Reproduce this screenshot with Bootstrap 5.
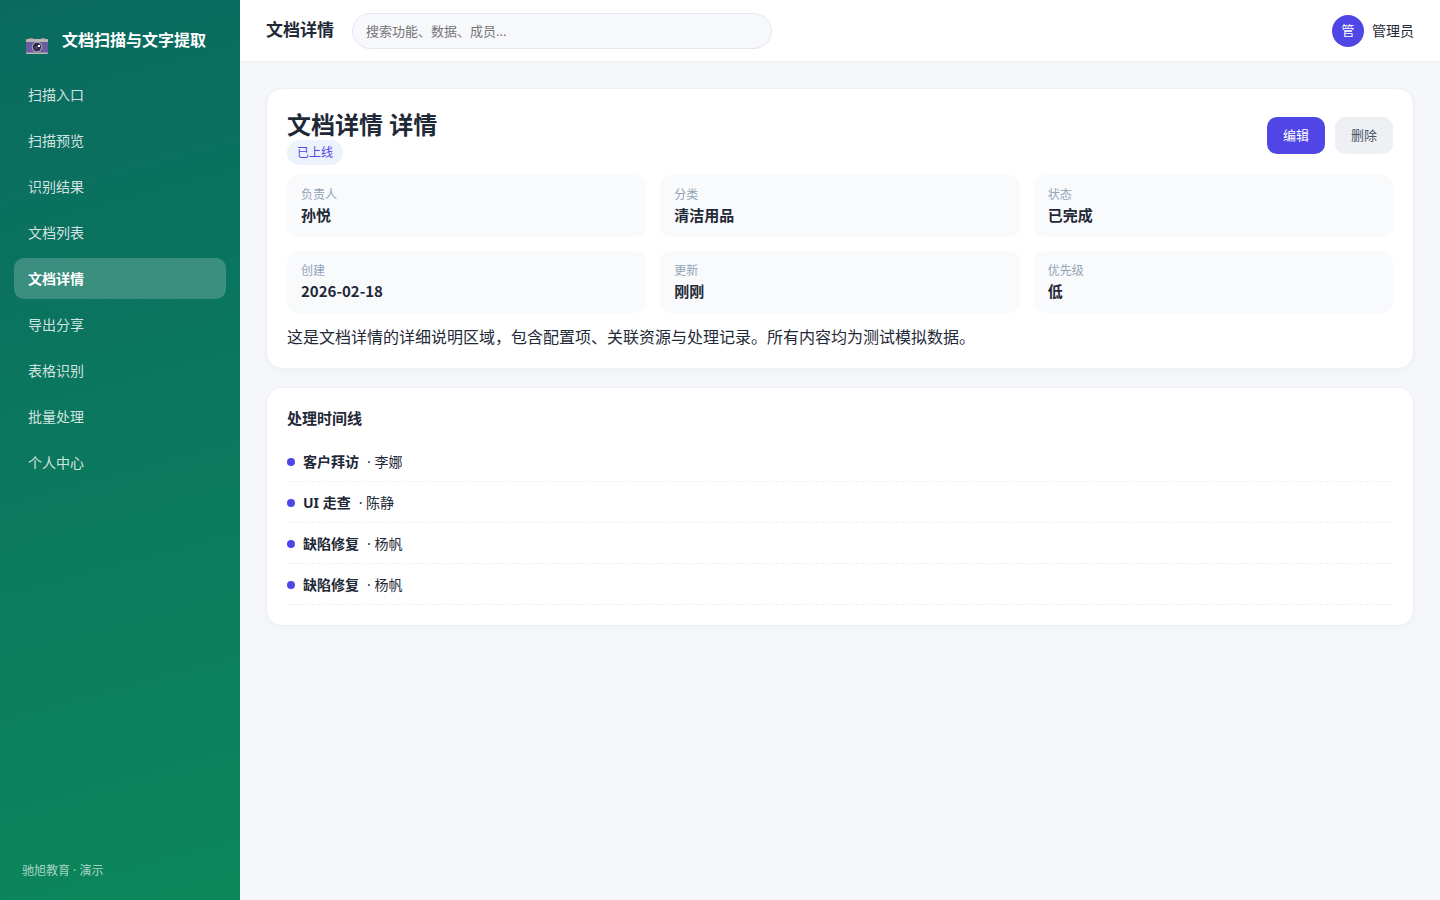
<!DOCTYPE html>
<html lang="zh-CN">
<head>
<meta charset="utf-8">
<meta name="viewport" content="width=device-width, initial-scale=1">
<title>文档详情</title>
<link href="https://cdn.jsdelivr.net/npm/bootstrap@5.3.0/dist/css/bootstrap.min.css" rel="stylesheet">
<style>
:root { --ink: #1f2937; --brand: #4f46e5; --line: #eef0f4; }
body { font-family: "Noto Sans", "Noto Sans CJK SC", sans-serif; font-size: 14px; line-height: 21px; color: var(--ink); background: #f5f7fb; }
.sidebar { width: 240px; padding: 18px 14px; background: linear-gradient(165deg, #0a6a60, #0c875b); }
.brand { height: 44px; padding: 0 12px; margin-bottom: 12px; gap: 14px; font-size: 16px; font-weight: 700; color: #fff; }
.brand svg { margin-top: 11px; }
.side-nav { gap: 5px; }
.side-nav .nav-link { padding: 10px 14px; border-radius: 10px; color: rgba(255,255,255,.82); }
.side-nav .nav-link.active { background: rgba(255,255,255,.2); color: #fff; font-weight: 700; }
.side-foot { padding: 0 8px; font-size: 12px; line-height: 22px; color: rgba(255,255,255,.65); }
.topbar { height: 62px; padding: 0 26px; gap: 18px; background: #fff; border-bottom: 1px solid var(--line); }
.topbar h1 { font-size: 17px; font-weight: 700; }
.search { max-width: 420px; height: 36px; padding: 0 13px; font-size: 13px; background: #f7f8fc; border: 1px solid #e5e7f0; border-radius: 18px; }
.search::placeholder { color: #757575; }
.avatar { width: 32px; height: 32px; border-radius: 50%; background: var(--brand); color: #fff; font-size: 13px; }
.content { padding: 26px; gap: 18px; }
.panel { padding: 20px; background: #fff; border: 1px solid var(--line); border-radius: 16px; box-shadow: 0 2px 6px rgba(30,41,80,.04); }
.panel h2 { font-size: 24px; line-height: 31px; font-weight: 700; }
.panel h3 { font-size: 15px; line-height: 20px; font-weight: 700; margin-bottom: 13px; }
.tag { display: block; width: fit-content; padding: 2px 10px; border-radius: 13px; background: #eef2ff; color: var(--brand); font-size: 12px; }
.actions { gap: 10px; }
.act { padding: 8px 16px; border: 0; border-radius: 10px; font-size: 13px; line-height: 21px; }
.act-main, .act-main:hover { background: var(--brand); color: #fff; }
.act-soft, .act-soft:hover { background: #eef0f4; color: #475569; }
.facts { gap: 14px; margin: 10px 0 14px; display: grid; grid-template-columns: repeat(3, 1fr); }
.fact { padding: 10px 14px 12px; border-radius: 10px; background: #f9fafc; }
.fact dt { font-size: 12px; line-height: 19px; font-weight: 400; color: #94a3b8; }
.fact dd { font-family: "Noto Sans CJK SC", sans-serif; font-size: 15px; line-height: 21px; font-weight: 700; margin: 0; }
.desc { font-size: 16px; line-height: 21px; }
.timeline li { gap: 8px; padding: 10px 0 9px; border-bottom: 1px dashed var(--line); }
.timeline li::before { content: ""; width: 8px; height: 8px; border-radius: 50%; background: var(--brand); }
</style>
</head>
<body>
<div class="d-flex min-vh-100">
  <aside class="sidebar d-flex flex-column flex-shrink-0">
    <div class="brand d-flex align-items-center">
      <svg width="22" height="16" viewBox="0 0 22 16" aria-hidden="true">
        <path d="M3 0h4v2H3zM15 0h4v2h-4z" fill="#b87d83"/>
        <rect y="1" width="22" height="15" rx="1" fill="#b5b6b7"/>
        <path d="M0 4h22v10.5H0z" fill="#6a5c9e"/>
        <circle cx="11" cy="9" r="5.3" fill="#a9a7ac"/>
        <circle cx="11" cy="9" r="4.2" fill="#302649"/>
        <circle cx="10.5" cy="9.5" r="2" fill="#49417a"/>
        <path d="M12 7h2v2h-2z" fill="#fff"/>
      </svg>
      <span>文档扫描与文字提取</span>
    </div>
    <nav class="side-nav nav flex-column">
      <a class="nav-link" href="#">扫描入口</a>
      <a class="nav-link" href="#">扫描预览</a>
      <a class="nav-link" href="#">识别结果</a>
      <a class="nav-link" href="#">文档列表</a>
      <a class="nav-link active" aria-current="page" href="#">文档详情</a>
      <a class="nav-link" href="#">导出分享</a>
      <a class="nav-link" href="#">表格识别</a>
      <a class="nav-link" href="#">批量处理</a>
      <a class="nav-link" href="#">个人中心</a>
    </nav>
    <div class="side-foot mt-auto">驰旭教育 · 演示</div>
  </aside>
  <div class="flex-grow-1">
    <header class="topbar d-flex align-items-center">
      <h1 class="m-0 text-nowrap">文档详情</h1>
      <input class="search form-control" type="search" aria-label="搜索" placeholder="搜索功能、数据、成员...">
      <div class="d-flex align-items-center gap-2 ms-auto text-nowrap">
        <span class="avatar d-flex align-items-center justify-content-center">管</span>
        <span>管理员</span>
      </div>
    </header>
    <main class="content d-flex flex-column">
      <section class="panel">
        <div class="d-flex align-items-start justify-content-between">
          <div>
            <h2 class="m-0">文档详情 详情</h2>
            <span class="tag">已上线</span>
          </div>
          <div class="actions d-flex pt-2">
            <button type="button" class="btn act act-main">编辑</button>
            <button type="button" class="btn act act-soft">删除</button>
          </div>
        </div>
        <dl class="facts">
          <div class="fact"><dt>负责人</dt><dd>孙悦</dd></div>
          <div class="fact"><dt>分类</dt><dd>清洁用品</dd></div>
          <div class="fact"><dt>状态</dt><dd>已完成</dd></div>
          <div class="fact"><dt>创建</dt><dd>2026-02-18</dd></div>
          <div class="fact"><dt>更新</dt><dd>刚刚</dd></div>
          <div class="fact"><dt>优先级</dt><dd>低</dd></div>
        </dl>
        <p class="desc m-0">这是文档详情的详细说明区域，包含配置项、关联资源与处理记录。所有内容均为测试模拟数据。</p>
      </section>
      <section class="panel">
        <h3>处理时间线</h3>
        <ul class="timeline list-unstyled m-0">
          <li class="d-flex align-items-center"><strong>客户拜访</strong><span>· 李娜</span></li>
          <li class="d-flex align-items-center"><strong>UI 走查</strong><span>· 陈静</span></li>
          <li class="d-flex align-items-center"><strong>缺陷修复</strong><span>· 杨帆</span></li>
          <li class="d-flex align-items-center"><strong>缺陷修复</strong><span>· 杨帆</span></li>
        </ul>
      </section>
    </main>
  </div>
</div>
<script src="https://cdn.jsdelivr.net/npm/bootstrap@5.3.0/dist/js/bootstrap.bundle.min.js"></script>
</body>
</html>
